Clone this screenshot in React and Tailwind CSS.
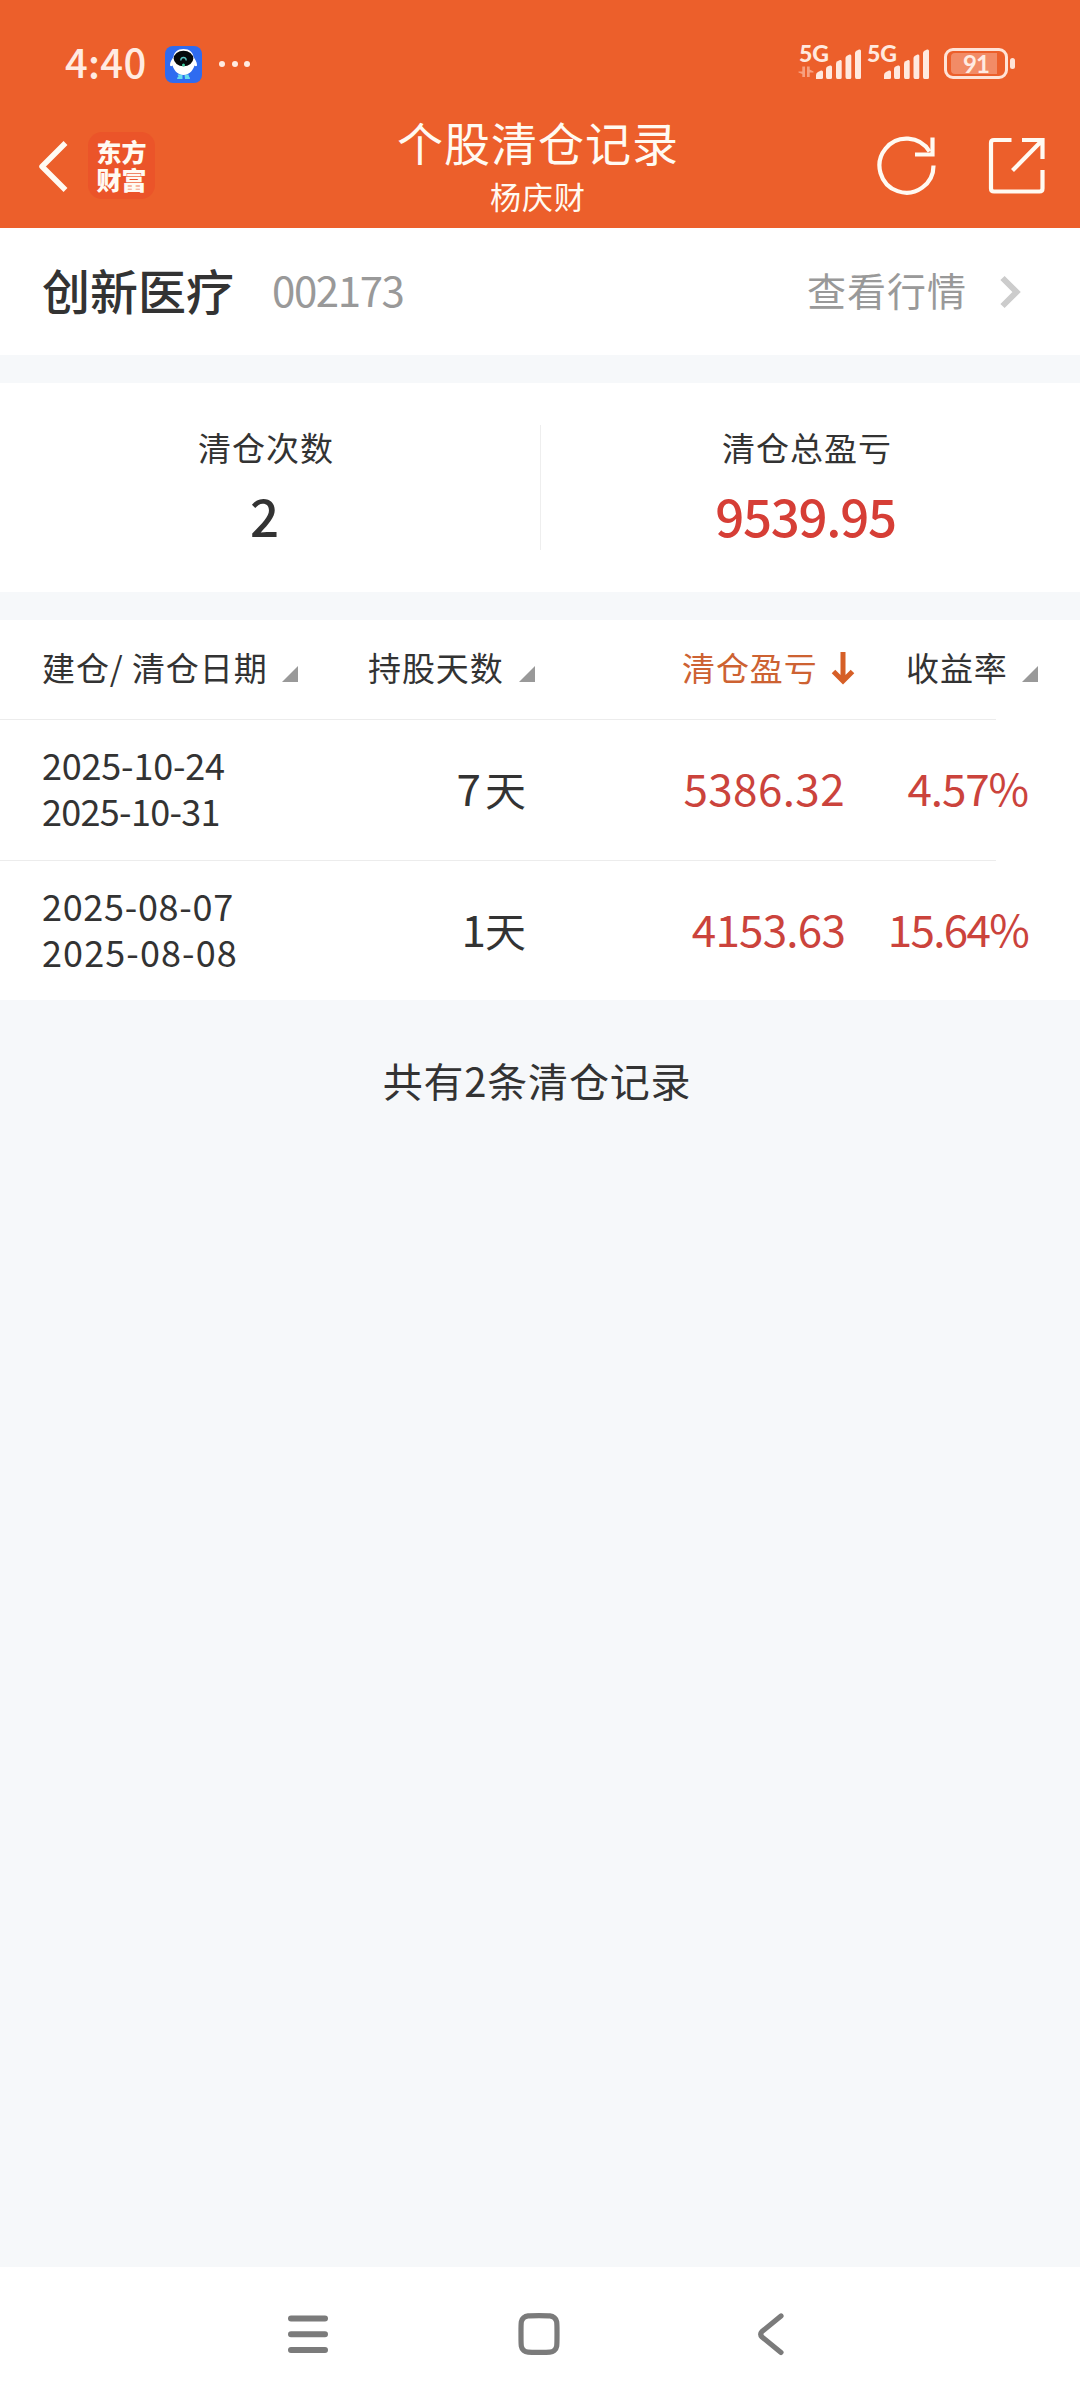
import React from "react";

const records = [
  {
    open: "2025-10-24",
    close: "2025-10-31",
    openTrack: "tracking-[-0.2px]",
    closeTrack: "tracking-[-0.7px]",
    days: "7",
    daysGap: "mr-1",
    profit: "5386.32",
    profitTrack: "tracking-[0.4px]",
    rate: "4.57%",
    rateTrack: "tracking-[-1.1px]",
  },
  {
    open: "2025-08-07",
    close: "2025-08-08",
    openTrack: "tracking-[0.7px]",
    closeTrack: "tracking-[1.1px]",
    days: "1",
    daysGap: "-mr-px",
    profit: "4153.63",
    profitTrack: "tracking-[-0.8px]",
    rate: "15.64%",
    rateTrack: "tracking-[-1.7px]",
  },
];

function Signal() {
  return (
    <svg width="46" height="31" viewBox="0 0 46 31" fill="#ffe9df" className="block">
      <path d="M0 30V26Q0 24 2 23L5 21.5Q7 21 7 23V28.5Q7 30 5.500 30Z" />
      <path d="M10 28V20Q10 18.500 11.500 17.600L14 16.500Q16 16 16 18V28.500Q16 30 14.500 30H11.500Q10 30 10 28Z" />
      <path d="M20 28V15Q20 13 21.500 12.200L24 11Q25.700 10.500 25.700 12.500V28.500Q25.700 30 24.200 30H21.500Q20 30 20 28Z" />
      <path d="M29.500 28V9Q29.500 7.500 31 6.700L33.500 5.600Q35.300 5 35.300 7V28.500Q35.300 30 33.800 30H31Q29.500 30 29.500 28Z" />
      <path d="M39 28V4Q39 2.500 40.500 1.700L43 0.600Q45 0 45 2V28.500Q45 30 43.500 30H40.500Q39 30 39 28Z" />
    </svg>
  );
}

function Network({ data }) {
  return (
    <div className="flex h-[38px] w-[68px]">
      <div className="flex w-[18px] flex-col">
        <span className="-ml-0.5 -mt-px mb-px block h-[20px] font-['Lato','Noto_Sans_CJK_SC',sans-serif] text-[23px] font-black leading-[20px] text-[#ffe9df]">5G</span>
        {data && (
          <svg width="16" height="12" viewBox="0 0 16 12" fill="#f7a07f" className="-ml-[3px] mt-[2px] shrink-0">
            <path d="M4.300 0.500H7V11H4.300V8L0.500 6.500V5.500H4.300Z" />
            <path d="M9 0.500H11.700V3.500L15.500 5.500V6.500H11.700V11H9Z" />
          </svg>
        )}
      </div>
      <div className="-ml-[3px] mt-[5px]"><Signal /></div>
    </div>
  );
}

function StatusBar() {
  return (
    <div className="flex h-[84px] items-start pl-[65px] pr-[65px] pt-[43px]">
      <span className="-mt-[2px] w-[84px] whitespace-nowrap text-[40px] font-medium leading-[40px] tracking-[0.3px] text-[#ffebe2]">4:40</span>
      <svg width="37" height="37" viewBox="0 0 37 37" className="ml-4 mt-[3px]">
        <rect width="37" height="37" rx="8" fill="#2f6bf0" />
        <path d="M12.500 28.500h5v4.500h-5.500q0-2 1.500-2.500zM19.500 28.500h4l.5 2q1 .5 1 2.500h-5z" fill="#66dcec" />
        <path d="M18.500 3c-6 0-9.500 3.500-10 8-1.500 2-3.500 5-3.500 8 0 1.500 1.500 1.500 2.500.5 2 6 6 9.500 11 9.500s9-3.500 11-9.500c1 1 2.500 1 2.500-.5 0-3-2-6-3.500-8-.5-4.500-4-8-10-8z" fill="#fff" />
        <ellipse cx="18.500" cy="12.500" rx="9.800" ry="7.800" fill="#060a0c" />
        <path d="M15.800 14.500q0-3 2.700-3t2.700 3" fill="none" stroke="#5fc9c4" strokeWidth="1.300" />
        <circle cx="18.500" cy="19" r="1.500" fill="#3fd0a0" />
      </svg>
      <div className="ml-[17px] mt-[18px] flex gap-[6.500px]">
        <i className="block size-[6px] rounded-full bg-[#ffebe2]" />
        <i className="block size-[6px] rounded-full bg-[#ffebe2]" />
        <i className="block size-[6px] rounded-full bg-[#ffebe2]" />
      </div>
      <div className="ml-auto mt-px flex">
        <Network data />
        <Network />
      </div>
      <div className="ml-[7px] mt-[5px] flex items-center">
        <div className="flex h-[31px] w-[64px] items-center rounded-[9px] border-[3px] border-[#ffe3d7] pl-1">
          <div className="flex h-[21px] w-[46px] items-center justify-center rounded-l-[4px] bg-[#f28b66] font-['Lato','Noto_Sans_CJK_SC',sans-serif] text-[24px] font-bold leading-[21px] tracking-[-1px] text-[#ffebe2]">
            <span className="pl-1">91</span>
          </div>
        </div>
        <i className="ml-0.5 block h-[11px] w-[5px] rounded-full bg-[#ffe3d7]" />
      </div>
    </div>
  );
}

function TitleBar() {
  return (
    <div className="grid h-[144px] grid-cols-[1fr_auto_1fr] text-[#fffaf2]">
      <div className="flex items-start pl-[37px]">
        <svg width="32" height="54" viewBox="0 0 32 54" className="mt-[55px]" fill="none" stroke="currentColor" strokeWidth="5.500" strokeLinejoin="round">
          <path d="M28.500 4L5 27.500L28.500 51" />
        </svg>
        <div className="ml-[19px] mt-[48px] flex h-[67px] w-[67px] flex-col items-center rounded-[14px] bg-[#eb5429] pt-[5px] text-[25px] font-black leading-[28px]">
          <span>东方</span>
          <span>财富</span>
        </div>
      </div>
      <div className="flex flex-col items-center pr-1">
        <h1 className="mt-[29px] text-[46px] font-normal leading-[56px] tracking-[1px]">个股清仓记录</h1>
        <p className="mt-[9px] text-[31px] leading-[36px] tracking-[1px]">杨庆财</p>
      </div>
      <div className="flex items-start justify-end pr-[34px] pt-[50px]">
        <svg width="62" height="62" viewBox="0 0 62 62" fill="none" stroke="currentColor" strokeWidth="4.200" className="mr-[49px]">
          <path d="M58.500 31.500A27 27 0 1 1 54.500 17.500" />
          <path d="M57.500 3.500V20.500H40" />
        </svg>
        <svg width="60" height="60" viewBox="0 0 60 60" fill="none" stroke="currentColor" strokeWidth="4.200" className="mt-px">
          <path d="M25.500 5H8Q5 5 5 8V53.500Q5 56.500 8 56.500H53.500Q56.500 56.500 56.500 53.500V35" />
          <path d="M36 5H56.500V24M56 5.500L26.500 35.500" />
        </svg>
      </div>
    </div>
  );
}

function SortMark() {
  return (
    <svg width="16" height="16" viewBox="0 0 16 16" className="mt-[46px]">
      <path d="M16 0V16H0Z" fill="#999" />
    </svg>
  );
}

export default function App() {
  return (
    <div className="flex h-[2400px] w-[1080px] flex-col overflow-hidden bg-[#f6f8fa] font-['Noto_Sans_CJK_SC',sans-serif] text-[#333]">
      <header className="h-[228px] shrink-0 bg-[#ec5f2b]">
        <StatusBar />
        <TitleBar />
      </header>

      <section className="flex h-[127px] shrink-0 items-center bg-white pl-[42px] pr-[57px]">
        <h2 className="pb-[6px] text-[48px] font-medium leading-[60px]">创新医疗</h2>
        <span className="ml-[38px] pb-[6px] text-[42px] leading-[60px] tracking-[-1.400px] text-[#999]">002173</span>
        <span className="ml-auto pb-[5px] text-[39px] leading-[60px] tracking-[1px] text-[#999]">查看行情</span>
        <svg width="24" height="34" viewBox="0 0 24 34" fill="none" stroke="#ccc" strokeWidth="6" className="ml-[32px]">
          <path d="M3.500 3L17.500 17L3.500 31" />
        </svg>
      </section>

      <section className="mt-7 flex h-[209px] shrink-0 items-start bg-white pt-[42px] text-center">
        <div className="w-[540px] pr-2">
          <p className="mt-1 text-[33px] leading-[36px] tracking-[1px]">清仓次数</p>
          <p className="mt-[20px] pr-[3px] text-[51px] font-medium leading-[60px]">2</p>
        </div>
        <div className="h-[125px] w-px bg-[#eee]" />
        <div className="flex-1 pr-[7px]">
          <p className="mt-1 text-[33px] leading-[36px] tracking-[1px]">清仓总盈亏</p>
          <p className="mt-[20px] pr-[3px] text-[51px] font-medium leading-[60px] tracking-[-1.300px] text-[#d63e36]">9539.95</p>
        </div>
      </section>

      <section className="mt-7 shrink-0 bg-white">
        <div className="flex h-[99px] text-[33px] leading-[94px] tracking-[0.9px]">
          <div className="flex w-[368px] pl-[42px]">
            <span className="w-[240px] whitespace-pre">建仓/ 清仓日期</span>
            <SortMark />
          </div>
          <div className="flex w-[314px]">
            <span className="w-[151px]">持股天数</span>
            <SortMark />
          </div>
          <div className="flex w-[224px] text-[#cd6232]">
            <span className="w-[149px]">清仓盈亏</span>
            <svg width="24" height="34" viewBox="0 0 24 34" fill="none" stroke="#d65f27" strokeWidth="5" className="mt-[32px]">
              <path d="M12 0V29M2.500 19.500L12 29L21.500 19.500" />
            </svg>
          </div>
          <div className="flex">
            <span className="w-[116px]">收益率</span>
            <SortMark />
          </div>
        </div>
        {records.map((r) => (
          <div key={r.open} className="h-[141px] last:h-[140px]">
            <div className="h-px w-[996px] bg-[#ececec]" />
            <div className="flex h-[140px] items-center pb-[6px] last:h-[140px]">
              <div className="w-[300px] pl-[42px] text-[36px] leading-[46px]">
                <p className={r.openTrack}>{r.open}</p>
                <p className={r.closeTrack}>{r.close}</p>
              </div>
              <div className="flex w-[226px] items-baseline justify-end leading-[60px]">
                <span className={r.daysGap + " text-[44px]"}>{r.days}</span>
                <span className="text-[41px]">天</span>
              </div>
              <div className="w-[319px] text-right text-[44px] leading-[60px] text-[#cb433c]">
                <span className={r.profitTrack}>{r.profit}</span>
              </div>
              <div className="w-[183px] text-right text-[44px] leading-[60px] text-[#cb433c]">
                <span className={r.rateTrack}>{r.rate}</span>
              </div>
            </div>
          </div>
        ))}
      </section>

      <p className="mt-[50px] pr-[6px] text-center text-[40px] leading-[60px] tracking-[0.8px]">共有2条清仓记录</p>

      <nav className="mt-auto flex h-[133px] shrink-0 items-center justify-center gap-[187px] bg-white pr-[2px]">
        <svg width="44" height="44" viewBox="0 0 44 44" fill="none" stroke="#7b7b7b" strokeWidth="6" strokeLinecap="round">
          <path d="M5 6.500H39M5 22.200H39M5 38H39" />
        </svg>
        <svg width="44" height="44" viewBox="0 0 44 44" fill="none" stroke="#7b7b7b" strokeWidth="5.200">
          <path d="M22 3.600C33 3.600 35 3.600 37.200 5.600C40.200 8 40 10 40 22S40.200 36 37.200 38.500C35 40.400 33 40.400 22 40.400S9 40.400 6.800 38.500C3.800 36 4 34 4 22S3.800 8 6.800 5.600C9 3.600 11 3.600 22 3.600Z" />
        </svg>
        <svg width="44" height="44" viewBox="0 0 44 44" fill="none" stroke="#7b7b7b" strokeWidth="5.200" strokeLinecap="round" strokeLinejoin="round">
          <path d="M33 4L14 19.500Q11.500 22.200 14 25L33 40.400" />
        </svg>
      </nav>
    </div>
  );
}
